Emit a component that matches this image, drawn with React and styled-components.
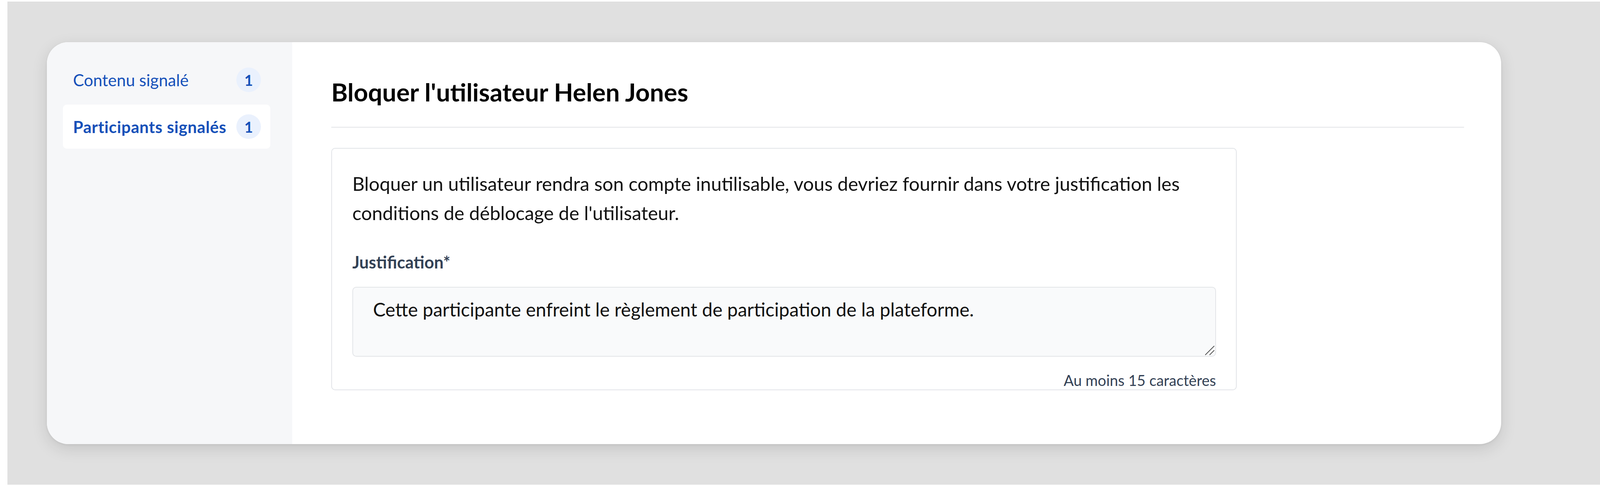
import React from "react";
import styled, { createGlobalStyle } from "styled-components";

const Global = createGlobalStyle`
  html, body { margin: 0; padding: 0; background: #ffffff; }
  body { font-family: Lato, "Noto Sans", sans-serif; }
  * { box-sizing: border-box; }
`;

const Stage = styled.div`
  margin: 4px 0 0 19px;
  height: 1238px;
  background: #e0e0e0;
  padding: 104px 0 0 101px;
`;

const Card = styled.div`
  width: 3723px;
  height: 1030px;
  display: flex;
  background: #ffffff;
  border-radius: 55px;
  overflow: hidden;
  box-shadow: 0 12px 40px rgba(0, 0, 0, 0.12), 0 2px 6px rgba(0, 0, 0, 0.06);
`;

const Sidebar = styled.nav`
  width: 628px;
  flex: none;
  background: #f6f7f9;
  padding: 40px 56px 0 41px;
  display: flex;
  flex-direction: column;
  gap: 7px;
`;

const NavItem = styled.a`
  height: 113px;
  display: flex;
  align-items: center;
  justify-content: space-between;
  padding: 0 24px 0 26px;
  border-radius: 10px;
  background: ${(p) => (p.$active ? "#ffffff" : "transparent")};
  color: #1550b9;
  font-size: 42px;
  font-weight: ${(p) => (p.$active ? 700 : 400)};
  letter-spacing: ${(p) => (p.$active ? "0.6px" : "0")};
  text-decoration: none;
  white-space: nowrap;
`;

const Badge = styled.span`
  width: 63px;
  height: 63px;
  border-radius: 50%;
  background: #eaf1fd;
  color: #1550b9;
  font-weight: 700;
  font-size: 38px;
  letter-spacing: 0;
  display: flex;
  align-items: center;
  justify-content: center;
  flex: none;
`;

const Main = styled.main`
  flex: 1;
  padding: 87px 95px 0 100px;
  display: flex;
  flex-direction: column;
`;

const Title = styled.h2`
  margin: 0;
  font-size: 64px;
  line-height: 82px;
  font-weight: 700;
  color: #000000;
`;

const Divider = styled.hr`
  margin: 48px 0 0;
  border: none;
  height: 2px;
  background: #e3e5e8;
`;

const Panel = styled.section`
  margin-top: 52px;
  width: 2318px;
  border: 2px solid #e2e4e8;
  border-radius: 10px;
  padding: 52px 51px 0 52px;
  display: flex;
  flex-direction: column;
`;

const Text = styled.p`
  margin: 0;
  font-size: 48.5px;
  line-height: 75px;
  color: #111111;
`;

const Label = styled.label`
  margin-top: 59px;
  font-size: 43px;
  line-height: 60px;
  font-weight: 700;
  color: #334155;
`;

const FieldWrap = styled.div`
  position: relative;
  margin-top: 33px;
`;

const Area = styled.textarea`
  display: block;
  width: 100%;
  height: 179px;
  resize: none;
  border: 2px solid #e3e5e8;
  border-radius: 10px;
  background: #f9fafb;
  padding: 20px 51px;
  font-family: Lato, "Noto Sans", sans-serif;
  font-size: 48px;
  line-height: 72px;
  color: #111111;
  outline: none;
`;

const Grip = styled.svg`
  position: absolute;
  right: 4px;
  bottom: 4px;
  width: 26px;
  height: 26px;
`;

const Hint = styled.div`
  margin-top: 36px;
  text-align: right;
  font-size: 38px;
  line-height: 48px;
  color: #334155;
`;

export default function App() {
  return (
    <>
      <Global />
      <Stage>
        <Card>
          <Sidebar>
            <NavItem href="#">
              <span>Contenu signalé</span>
              <Badge>1</Badge>
            </NavItem>
            <NavItem href="#" $active>
              <span>Participants signalés</span>
              <Badge>1</Badge>
            </NavItem>
          </Sidebar>
          <Main>
            <Title>Bloquer l'utilisateur Helen Jones</Title>
            <Divider />
            <Panel>
              <Text>
                Bloquer un utilisateur rendra son compte inutilisable, vous devriez fournir dans votre justification les
                conditions de déblocage de l'utilisateur.
              </Text>
              <Label htmlFor="justif">Justification*</Label>
              <FieldWrap>
                <Area
                  id="justif"
                  defaultValue="Cette participante enfreint le règlement de participation de la plateforme."
                />
                <Grip viewBox="0 0 26 26">
                  <path d="M3 25 L25 3 M14 25 L25 14" stroke="#555" strokeWidth="2" strokeLinecap="round" fill="none" />
                </Grip>
              </FieldWrap>
              <Hint>Au moins 15 caractères</Hint>
            </Panel>
          </Main>
        </Card>
      </Stage>
    </>
  );
}
